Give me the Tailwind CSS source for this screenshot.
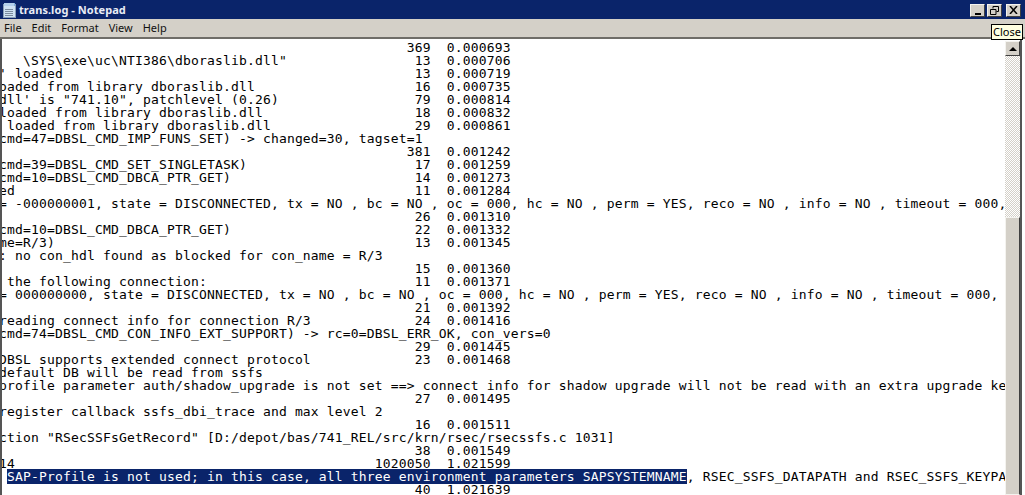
<!doctype html>
<html>
<head>
<meta charset="utf-8">
<script src="https://cdn.jsdelivr.net/npm/@tailwindcss/browser@4"></script>
<title>trans.log - Notepad</title>
</head>
<body class="w-[1025px] h-[495px] overflow-hidden bg-white font-['Liberation_Sans',sans-serif]">
<div class="relative flex h-[495px] w-[1025px] flex-col overflow-hidden">
  <header class="flex h-[19px] shrink-0 items-center gap-[1px] bg-[#0a246a] pl-[1px] pr-[4px] pt-[1px]">
    <svg width="17" height="17" viewBox="0 0 17 17" class="shrink-0"><rect x="2.500" y="2.500" width="12" height="13" fill="#cfe2f3" stroke="#8aa0b8"/><path d="M3 1h11v3H3z" fill="#7fb0e0"/><path d="M4 1v3M6 1v3M8 1v3M10 1v3M12 1v3" stroke="#e8f0f8"/><path d="M4 7.500h8M4 9.500h8M4 11.500h8M4 13.500h8" stroke="#7b8c9f"/></svg>
    <span class="font-['Noto_Sans',sans-serif] text-[11px] font-bold tracking-[0.05px] text-[#e8ecf5]">trans.log - Notepad</span>
    <div class="ml-auto flex gap-[2px] font-bold">
      <span class="flex h-[13px] w-[15px] items-end justify-center border border-[#f4f3ef] border-r-[#404040] border-b-[#404040] bg-[#d4d0c8] pb-[1px]"><i class="block h-[2px] w-[6px] bg-black"></i></span>
      <span class="flex h-[13px] w-[15px] items-center justify-center border border-[#f4f3ef] border-r-[#404040] border-b-[#404040] bg-[#d4d0c8]"><svg width="9" height="9" viewBox="0 0 9 9" fill="none" stroke="#000"><path d="M3 2.500V.5h5.500v5H6.500M.5 3.500h5.500v5H.5z"/></svg></span>
      <span class="ml-[2px] flex h-[13px] w-[15px] items-center justify-center border border-[#f4f3ef] border-r-[#404040] border-b-[#404040] bg-[#d4d0c8]"><svg width="9" height="8" viewBox="0 0 9 8" stroke="#000" stroke-width="1.500"><path d="M1 0l7 8M8 0l-7 8"/></svg></span>
    </div>
  </header>
  <nav class="flex h-[20px] shrink-0 items-center gap-[10px] border-b-2 border-b-[#6f6d68] bg-[#d4d0c8] pl-[4px] font-['Noto_Sans',sans-serif] text-[11px] text-[#111]">
    <span>File</span><span>Edit</span><span>Format</span><span>View</span><span>Help</span>
  </nav>
  <main class="flex min-h-0 flex-1">
    <div class="min-w-0 flex-1 overflow-hidden border-l-2 border-l-[#555]">
<pre class="ml-[-3px] mt-[2px] font-['DejaVu_Sans_Mono',monospace] text-[13px] leading-[13px] tracking-[0.17px] text-black">
                                                   369  0.000693
   \SYS\exe\uc\NTI386\dboraslib.dll"                13  0.000706
' loaded                                            13  0.000719
oaded from library dboraslib.dll                    16  0.000735
dll' is "741.10", patchlevel (0.26)                 79  0.000814
loaded from library dboraslib.dll                   18  0.000832
 loaded from library dboraslib.dll                  29  0.000861
cmd=47=DBSL_CMD_IMP_FUNS_SET) -> changed=30, tagset=1
                                                   381  0.001242
cmd=39=DBSL_CMD_SET_SINGLETASK)                     17  0.001259
cmd=10=DBSL_CMD_DBCA_PTR_GET)                       14  0.001273
ed                                                  11  0.001284
= -000000001, state = DISCONNECTED, tx = NO , bc = NO , oc = 000, hc = NO , perm = YES, reco = NO , info = NO , timeout = 000,
                                                    26  0.001310
cmd=10=DBSL_CMD_DBCA_PTR_GET)                       22  0.001332
me=R/3)                                             13  0.001345
: no con_hdl found as blocked for con_name = R/3
                                                    15  0.001360
 the following connection:                          11  0.001371
= 000000000, state = DISCONNECTED, tx = NO , bc = NO , oc = 000, hc = NO , perm = YES, reco = NO , info = NO , timeout = 000,
                                                    21  0.001392
reading connect info for connection R/3             24  0.001416
cmd=74=DBSL_CMD_CON_INFO_EXT_SUPPORT) -> rc=0=DBSL_ERR_OK, con_vers=0
                                                    29  0.001445
DBSL supports extended connect protocol             23  0.001468
default DB will be read from ssfs
profile parameter auth/shadow_upgrade is not set ==> connect info for shadow upgrade will not be read with an extra upgrade ke
                                                    27  0.001495
register callback ssfs_dbi_trace and max level 2
                                                    16  0.001511
ction "RSecSSFsGetRecord" [D:/depot/bas/741_REL/src/krn/rsec/rsecssfs.c 1031]
                                                    38  0.001549
14                                             1020050  1.021599
 <span class="bg-[#0a246a] text-white">SAP-Profile is not used; in this case, all three environment parameters SAPSYSTEMNAME</span>, RSEC_SSFS_DATAPATH and RSEC_SSFS_KEYPA
                                                    40  1.021639</pre>
    </div>
    <aside class="flex w-[15px] shrink-0 flex-col bg-[length:2px_2px] bg-[conic-gradient(#d4d0c8_25%,#fff_0_50%,#d4d0c8_0_75%,#fff_0)]">
      <div class="h-[2px] shrink-0 bg-white"></div>
      <span class="flex h-[15px] shrink-0 items-center justify-center border border-[#f4f3ef] border-r-[#404040] border-b-[#404040] bg-[#d4d0c8]"><i class="block h-0 w-0 border-x-[4px] border-b-[4px] border-x-transparent border-b-black"></i></span>
      <div class="h-[161px] shrink-0"></div>
      <div class="flex-1 border border-[#f4f3ef] border-r-[#404040] bg-[#d4d0c8]"></div>
    </aside>
    <div class="w-[5px] shrink-0 border-l-2 border-l-[#555] bg-white"></div>
  </main>
  <div class="absolute left-[991px] top-[24px] flex h-[16px] w-[32px] items-center justify-center border border-black bg-[#ffffe1] font-['Noto_Sans',sans-serif] text-[11px] text-black">Close</div>
</div>
</body>
</html>
